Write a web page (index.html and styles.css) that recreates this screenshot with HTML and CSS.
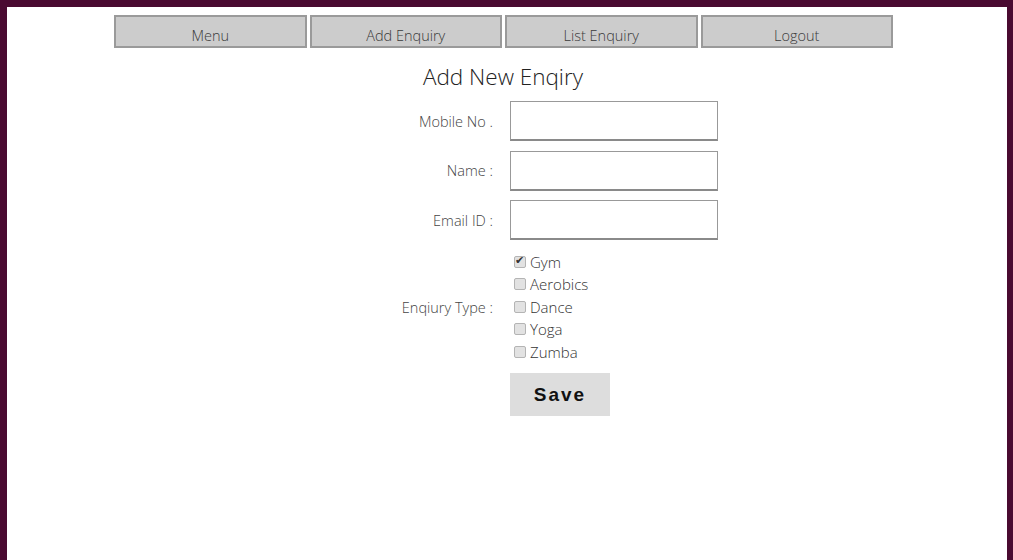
FILE: index.html
```html
<!DOCTYPE html>
<html>
<head>
<meta charset="utf-8">
<link rel="stylesheet" href="styles.css">
</head>
<body>
<div class="frame">
  <nav class="nav">
    <a class="nav-btn">Menu</a>
    <a class="nav-btn">Add Enquiry</a>
    <a class="nav-btn">List Enquiry</a>
    <a class="nav-btn">Logout</a>
  </nav>
  <h1 class="title">Add New Enqiry</h1>
  <form class="form">
    <div class="row">
      <label class="label">Mobile No .</label>
      <input class="field" type="text">
    </div>
    <div class="row">
      <label class="label">Name :</label>
      <input class="field" type="text">
    </div>
    <div class="row">
      <label class="label">Email ID :</label>
      <input class="field" type="text">
    </div>
    <div class="row row-types">
      <label class="label">Enqiury Type :</label>
      <div class="types">
        <label class="type"><input class="check" type="checkbox" checked> Gym</label>
        <label class="type"><input class="check" type="checkbox"> Aerobics</label>
        <label class="type"><input class="check" type="checkbox"> Dance</label>
        <label class="type"><input class="check" type="checkbox"> Yoga</label>
        <label class="type"><input class="check" type="checkbox"> Zumba</label>
      </div>
    </div>
    <div class="row row-save">
      <span class="label"></span>
      <button class="save" type="button">Save</button>
    </div>
  </form>
</div>
</body>
</html>
```
FILE: styles.css
```css
html, body {
  margin: 0;
  padding: 0;
  background: #fff;
}
.frame {
  box-sizing: border-box;
  height: 560px;
  border-top: 7px solid #4a0a31;
  border-left: 7px solid #4a0a31;
  border-right: 6px solid #4a0a31;
  font-family: "Open Sans", "Noto Sans", sans-serif;
  padding-top: 8px;
}
.nav {
  display: flex;
  gap: 3px;
  margin-left: 107px;
  width: 779px;
}
.nav-btn {
  box-sizing: border-box;
  flex: 1;
  height: 33px;
  background: #cccccc;
  border: 2px solid #9a9a9a;
  color: #3a3a3a;
  font-size: 14.5px;
  font-weight: 300;
  text-align: center;
  line-height: 31px;
  padding-top: 3px;
}
.title {
  margin: 13px 0 0 0;
  font-size: 22.5px;
  font-weight: 300;
  color: #222;
  text-align: center;
  padding-right: 8px;
  line-height: 32px;
}
.form {
  margin-top: 8px;
  margin-left: 286px;
}
.row {
  display: flex;
  align-items: center;
  margin-bottom: 9.5px;
}
.label {
  width: 200px;
  text-align: right;
  margin-right: 17px;
  font-size: 14.5px;
  font-weight: 300;
  color: #444;
}
.field {
  box-sizing: border-box;
  width: 208px;
  height: 40px;
  margin: 0;
  border: 1px solid #999;
  border-bottom: 2px solid #8a8a8a;
  background: #fff;
}
.row-types {
  margin-top: 12.5px;
  margin-bottom: 0;
}
.types {
  display: flex;
  flex-direction: column;
  margin-top: -2px;
}
.type {
  font-size: 15px;
  font-weight: 300;
  color: #333;
  line-height: 22.5px;
  height: 22.5px;
  display: flex;
  align-items: center;
}
.check {
  appearance: none;
  -webkit-appearance: none;
  box-sizing: border-box;
  width: 12px;
  height: 12px;
  margin: 0 4px 0 4px;
  border: 1px solid #b4b4b4;
  border-radius: 2px;
  background: #e2e2e2;
  position: relative;
}
.check:checked::after {
  content: "\2714";
  position: absolute;
  left: 0;
  top: -4px;
  font-size: 11px;
  line-height: 14px;
  color: #333;
}
.row-save {
  margin-top: 10px;
}
.save {
  width: 100px;
  height: 43px;
  background: #dddddd;
  border: none;
  font-family: "Liberation Sans", Arial, sans-serif;
  font-weight: bold;
  font-size: 19px;
  letter-spacing: 2px;
  color: #111;
  padding: 0;
}
```
